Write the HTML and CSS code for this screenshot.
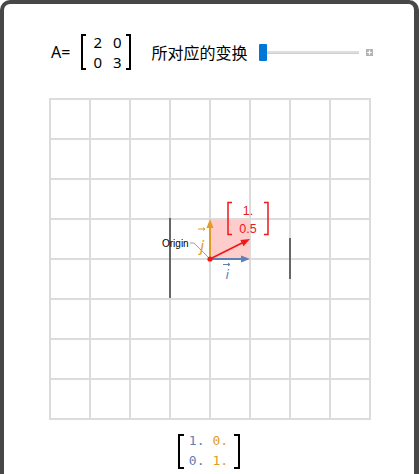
FILE: index.html
```html
<!DOCTYPE html>
<html lang="zh">
<head>
<meta charset="utf-8">
<title>Transform</title>
<link rel="stylesheet" href="styles.css">
</head>
<body>
<div class="frame">
  <div class="header">
    <span class="alabel">A=</span>
    <span class="matrix">
      <span class="br br-left"></span>
      <span class="cells">
        <span>2</span><span>0</span>
        <span>0</span><span>3</span>
      </span>
      <span class="br br-right"></span>
    </span>
    <span class="caption">所对应的变换</span>
    <span class="slider">
      <span class="thumb"></span>
      <span class="track"></span>
      <svg class="plus" width="8" height="8" viewBox="0 0 8 8"><rect width="8" height="8" fill="#b3b3b3"/><path d="M4 1.5V6.5M1.5 4H6.5" stroke="#fff" stroke-width="1.4"/></svg>
    </span>
  </div>

  <svg class="plot" width="322" height="322" viewBox="0 0 322 322">
    <g stroke="#dcdcdc" stroke-width="2">
      <line x1="1" y1="0" x2="1" y2="322"/>
      <line x1="41" y1="0" x2="41" y2="322"/>
      <line x1="81" y1="0" x2="81" y2="322"/>
      <line x1="121" y1="0" x2="121" y2="322"/>
      <line x1="161" y1="0" x2="161" y2="322"/>
      <line x1="201" y1="0" x2="201" y2="322"/>
      <line x1="241" y1="0" x2="241" y2="322"/>
      <line x1="281" y1="0" x2="281" y2="322"/>
      <line x1="321" y1="0" x2="321" y2="322"/>
      <line y1="1" x1="0" y2="1" x2="322"/>
      <line y1="41" x1="0" y2="41" x2="322"/>
      <line y1="81" x1="0" y2="81" x2="322"/>
      <line y1="121" x1="0" y2="121" x2="322"/>
      <line y1="161" x1="0" y2="161" x2="322"/>
      <line y1="201" x1="0" y2="201" x2="322"/>
      <line y1="241" x1="0" y2="241" x2="322"/>
      <line y1="281" x1="0" y2="281" x2="322"/>
      <line y1="321" x1="0" y2="321" x2="322"/>
    </g>
    <rect x="161" y="121" width="40" height="40" fill="#ffcccc"/>
    <g stroke="#676767" stroke-width="2">
      <line x1="121" y1="120" x2="121" y2="200"/>
      <line x1="241" y1="140" x2="241" y2="181"/>
    </g>
    <line x1="161" y1="161" x2="194" y2="161" stroke="#5e81b5" stroke-width="2"/>
    <polygon points="201,161 192,157.5 192,164.5" fill="#5e81b5"/>
    <line x1="161" y1="161" x2="161" y2="128" stroke="#e19c24" stroke-width="2"/>
    <polygon points="161,121 157.5,130 164.5,130" fill="#e19c24"/>
    <line x1="161" y1="161" x2="194" y2="144.5" stroke="#f01818" stroke-width="1.6"/>
    <polygon points="201,141 194.5,148.2 191.4,141.9" fill="#f01818"/>
    <circle cx="161" cy="161" r="2.6" fill="#f01818"/>

    <polyline points="141,145 145,145 159,159" fill="none" stroke="#a0a0a0" stroke-width="1"/>
    <text x="113" y="149" class="origin">Origin</text>

    <g stroke="#e19c24" stroke-width="1" fill="none">
      <line x1="149" y1="131" x2="156" y2="131"/>
      <polyline points="154,129.5 156,131 154,132.5"/>
    </g>
    <text x="151" y="154" class="vlabel jl">j</text>
    <g stroke="#5e81b5" stroke-width="1" fill="none">
      <line x1="174" y1="166.5" x2="181" y2="166.5"/>
      <polyline points="179,165 181,166.5 179,168"/>
    </g>
    <text x="176.5" y="181" class="vlabel il">i</text>

    <g stroke="#f01818" stroke-width="1.5" fill="none">
      <polyline points="183,104.5 179,104.5 179,136.5 183,136.5"/>
      <polyline points="215,104.5 219,104.5 219,136.5 215,136.5"/>
    </g>
    <text x="199" y="117" class="vec">1.</text>
    <text x="199" y="135" class="vec">0.5</text>
  </svg>

  <div class="result">
    <span class="rbr rbr-left"></span>
    <span class="rcells">
      <span class="ci">1.</span><span class="cj">0.</span>
      <span class="ci">0.</span><span class="cj">1.</span>
    </span>
    <span class="rbr rbr-right"></span>
  </div>
</div>
</body>
</html>
```

FILE: styles.css
```css
html, body {
  margin: 0;
  padding: 0;
  background: #ffffff;
}

body {
  font-family: "Noto Sans", "Noto Sans CJK SC", sans-serif;
  color: #000;
  overflow: hidden;
}

.frame {
  box-sizing: border-box;
  width: 419px;
  height: 474px;
  border: 4px solid #474747;
  border-right-width: 5px;
  border-bottom: none;
  border-radius: 10px 10px 0 0;
  background: #fff;
  padding: 28px 0 0 45px;
}

.header {
  display: flex;
  align-items: center;
  height: 40px;
  padding-left: 2px;
}

.alabel {
  font-size: 16px;
  line-height: 20px;
  margin-right: 11px;
}

.matrix {
  display: inline-flex;
  align-items: center;
  margin-right: 21px;
}

.br {
  display: block;
  box-sizing: border-box;
  width: 5px;
  height: 36px;
  border: 2px solid #000;
}

.br-left { border-right: none; }
.br-right { border-left: none; }

.cells {
  display: grid;
  grid-template-columns: auto auto;
  column-gap: 11px;
  padding: 0 4px 0 7px;
  font-size: 15px;
  line-height: 20px;
}

.caption {
  font-family: "Noto Sans CJK SC", sans-serif;
  font-size: 16px;
  line-height: 20px;
  margin-right: 11px;
}

.slider {
  display: inline-flex;
  align-items: center;
}

.thumb {
  display: block;
  width: 8px;
  height: 17px;
  background: #0078d7;
  border-radius: 1px;
}

.track {
  display: block;
  box-sizing: border-box;
  width: 92px;
  height: 3px;
  background: #dedede;
  border-bottom: 1px solid #cfcfcf;
}

.plus {
  display: block;
  margin-left: 7px;
  width: 7px;
  height: 7px;
}

.plot {
  display: block;
  margin-top: 26px;
}

.origin {
  font-family: "Liberation Sans", sans-serif;
  font-size: 10px;
  fill: #000;
}

.vlabel {
  font-family: "DejaVu Sans", sans-serif;
  font-style: italic;
  font-size: 13px;
}

.jl {
  fill: #e19c24;
  font-size: 15px;
}

.il { fill: #5e81b5; }

.vec {
  font-family: "Liberation Sans", sans-serif;
  font-size: 12.5px;
  fill: #f01818;
  text-anchor: middle;
}

.result {
  display: flex;
  justify-content: center;
  align-items: center;
  margin: 11px 0 0 -45px;
}

.rbr {
  display: block;
  box-sizing: border-box;
  width: 6px;
  height: 35px;
  border: 2px solid #000;
}

.rbr-left { border-right: none; }
.rbr-right { border-left: none; }

.rcells {
  display: grid;
  grid-template-columns: auto auto;
  column-gap: 8px;
  padding: 0 6px 0 5px;
  font-family: "DejaVu Sans Mono", monospace;
  font-size: 13px;
  line-height: 20px;
}

.ci { color: #5e81b5; }
.cj { color: #e19c24; }
```
